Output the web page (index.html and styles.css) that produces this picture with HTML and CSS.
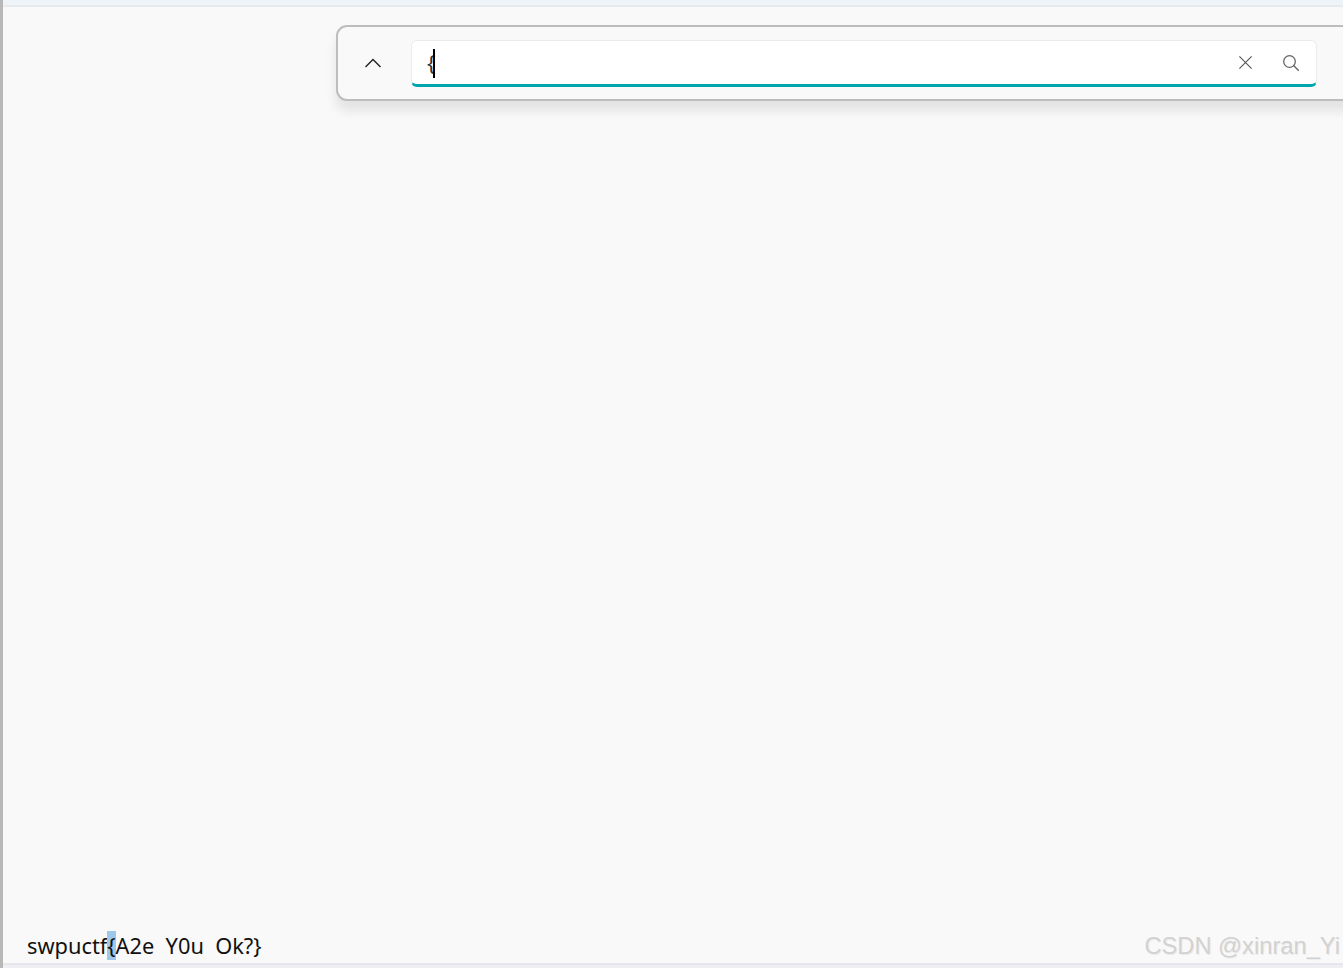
FILE: index.html
```html
<!DOCTYPE html>
<html lang="en">
<head>
<meta charset="utf-8">
<title>Find</title>
<link rel="stylesheet" href="styles.css">
</head>
<body>
<div class="window">
  <div class="top-strip"></div>
  <main class="content">
    <p class="doc-line">swpuctf<span class="match">{</span>A2e&nbsp; Y0u&nbsp; Ok?}</p>
  </main>
  <div class="bottom-strip"></div>
  <section class="find-bar">
    <button class="prev" aria-label="Previous">
      <svg width="18" height="12" viewBox="0 0 18 12"><path d="M1.5 10 L9 2.5 L16.5 10" fill="none" stroke="#222" stroke-width="1.4"/></svg>
    </button>
    <div class="find-input">
      <span class="query">{</span><span class="caret"></span>
      <span class="spacer"></span>
      <svg class="clear" width="16" height="16" viewBox="0 0 16 16"><path d="M1.5 1.5 L14.5 14.5 M14.5 1.5 L1.5 14.5" fill="none" stroke="#555" stroke-width="1.2"/></svg>
      <svg class="search" width="18" height="18" viewBox="0 0 18 18"><circle cx="7.5" cy="7.5" r="5.8" fill="none" stroke="#666" stroke-width="1.3"/><path d="M11.6 11.6 L16.8 16.8" fill="none" stroke="#666" stroke-width="1.4"/></svg>
    </div>
  </section>
  <div class="watermark">CSDN @xinran_Yi</div>
</div>
</body>
</html>
```
FILE: styles.css
```css
html, body {
  margin: 0;
  height: 100%;
  overflow: hidden;
}
.window {
  position: relative;
  display: flex;
  flex-direction: column;
  height: 968px;
  background: #f9f9f9;
  border-left: 3px solid #b8b8b8;
  box-sizing: border-box;
  overflow: hidden;
  font-family: "Noto Sans", "Open Sans", sans-serif;
}
.top-strip {
  height: 5px;
  flex: none;
  background: #eff4f8;
  border-bottom: 2px solid #e6eaed;
}
.content {
  flex: 1;
  display: flex;
  align-items: flex-end;
  padding-left: 24px;
}
.doc-line {
  margin: 0 0 2px;
  font-size: 21.8px;
  line-height: 30px;
  color: #111;
  white-space: pre;
}
.match {
  background: #9cc8ea;
}
.bottom-strip {
  height: 3px;
  flex: none;
  background: #eeeef3;
  border-top: 2px solid #e6e6ec;
}
.find-bar {
  position: absolute;
  left: 333px;
  top: 25px;
  width: 1100px;
  height: 76px;
  box-sizing: border-box;
  display: flex;
  align-items: center;
  background: #f9f9f9;
  border: 2px solid #bdbdbd;
  border-radius: 11px;
  box-shadow: 0 10px 12px rgba(0, 0, 0, 0.09);
}
.prev {
  width: 73px;
  flex: none;
  padding: 0 3px 0 0;
  background: none;
  border: 0;
  display: flex;
  justify-content: center;
}
.find-input {
  width: 906px;
  height: 47px;
  flex: none;
  box-sizing: border-box;
  display: flex;
  align-items: center;
  padding: 0 16px 0 15px;
  background: #fff;
  border: 1px solid #ebebeb;
  border-bottom: 3px solid #00a5ad;
  border-radius: 6px;
}
.query {
  font-size: 22px;
  color: #333;
}
.caret {
  width: 2px;
  height: 29px;
  margin: 2px 0 0 -2px;
  background: #000;
}
.spacer {
  flex: 1;
}
.clear {
  width: 15px;
  height: 15px;
  margin-right: 29px;
}
.search {
  width: 18px;
  height: 18px;
  margin-top: 2px;
}
.watermark {
  position: absolute;
  right: 3px;
  bottom: 7px;
  font-family: "Liberation Sans", Arial, sans-serif;
  font-size: 23.7px;
  color: #d2d2d2;
  line-height: 30px;
  text-shadow: 1px 1px 1px rgba(0, 0, 0, 0.06);
}
```
